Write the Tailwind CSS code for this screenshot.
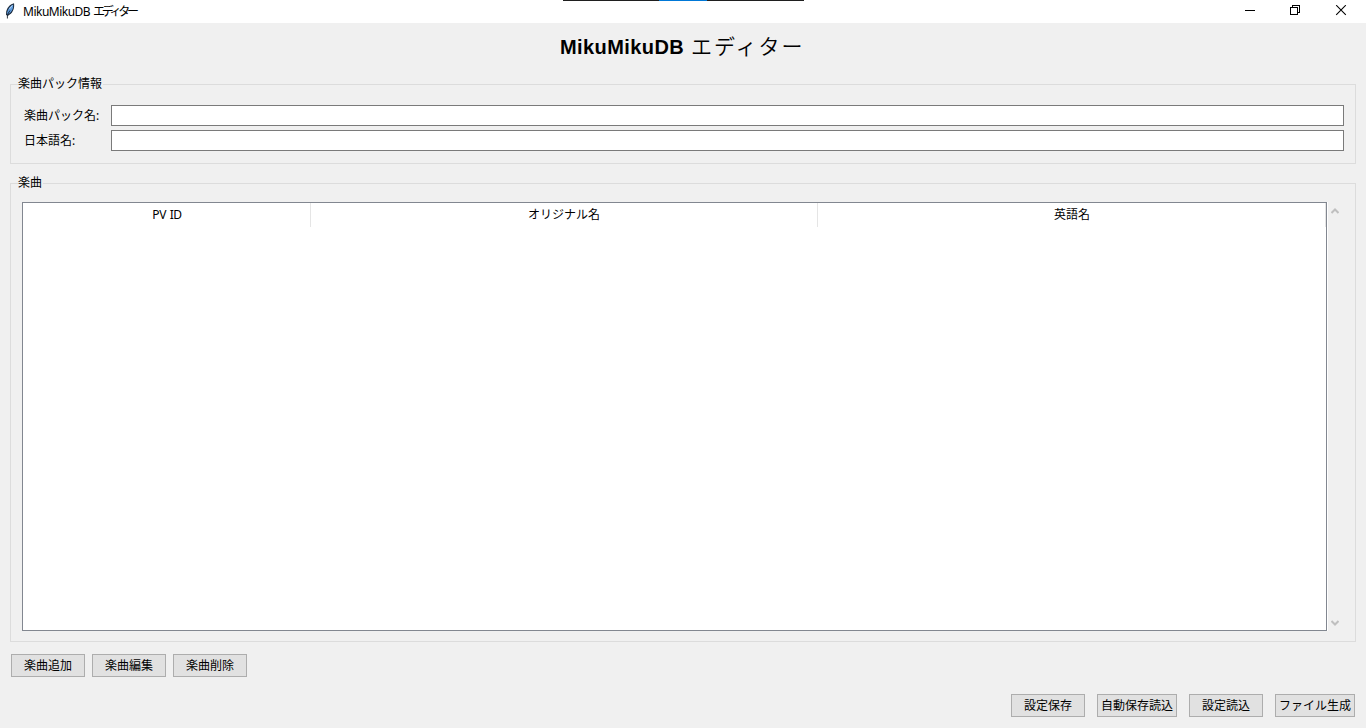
<!DOCTYPE html>
<html lang="ja">
<head>
<meta charset="utf-8">
<title>MikuMikuDB エディター</title>
<script src="https://cdn.jsdelivr.net/npm/@tailwindcss/browser@4"></script>
</head>
<body class="w-[1366px] h-[728px] overflow-hidden bg-[#f0f0f0] text-black text-[12px] leading-[16px] font-['Noto_Sans','Noto_Sans_CJK_JP',sans-serif]">
<div class="relative flex h-full flex-col">
  <div class="absolute left-[563px] top-0 flex h-px w-[241px] bg-[#1f1f1f]"><div class="ml-24 h-px w-12 bg-[#0078d7]"></div></div>

  <header class="flex h-[23px] shrink-0 items-center bg-white">
    <svg class="mb-[2px] ml-[5px] h-4 w-[10px] shrink-0" viewBox="0 0 10 16">
      <path d="M9 .3C5.5 1 2.2 4.5 1.2 8.5L1 12L2.4 12.8C5.2 12 7.9 9 8.8 5.5C9.2 3.5 9.3 1.5 9 .3Z" fill="#1d2b3c"/>
      <path d="M8.2 1.5C5.3 2.8 3 5.5 2.1 9.5L2.4 11.8C5 10.5 7.4 7.8 8 4.8Z" fill="#5b9be0"/>
      <path d="M5 7.5L3.4 10L2.4 13V15.5" fill="none" stroke="#16202c" stroke-width=".9"/>
      <path d="M7.4 2.4L4.4 6" stroke="#b9d4f0" stroke-width="1"/>
    </svg>
    <div class="ml-[8px] flex whitespace-pre"><span class="w-[70px] tracking-[-0.5px]">MikuMikuDB</span><span class="tracking-[-3.3px]">エディター</span></div>
    <div class="mb-[2px] ml-auto mr-[19px] flex items-center gap-[35px]">
      <svg class="h-[11px] w-[10px]" viewBox="0 0 10 11" shape-rendering="crispEdges"><path d="M0 5.5H10" stroke="#000"/></svg>
      <svg class="h-[11px] w-[10px]" viewBox="0 0 10 11" shape-rendering="crispEdges" fill="none" stroke="#000"><path d="M.5 2.5H7.5V9.5H.5Z M2.5 2.5V.5H9.5V7.5H7.5"/></svg>
      <svg class="h-[11px] w-[12px]" viewBox="0 0 12 11" fill="none" stroke="#000" stroke-width="1.1"><path d="M1.2 .2L10.8 9.8M10.8 .2L1.2 9.8"/></svg>
    </div>
  </header>

  <h1 class="ml-[560px] mt-[11px] flex h-[26px] shrink-0 items-center whitespace-pre leading-[26px]"><span class="w-[131px] font-['Liberation_Sans',sans-serif] text-[20px] font-bold tracking-[0.42px]">MikuMikuDB</span><span class="mb-[4px] font-['Noto_Sans_CJK_JP',sans-serif] text-[21px] font-[350] tracking-[2px]">エディター</span></h1>

  <section class="relative mx-[10px] mt-[24px] flex h-[80px] shrink-0 flex-col gap-1 border border-[#dcdcdc] pt-5 pl-[13px]">
    <div class="absolute left-[7px] top-[-9px] bg-[#f0f0f0] pr-px whitespace-nowrap">楽曲パック情報</div>
    <label class="flex h-[21px] items-center"><span class="w-[87px] whitespace-nowrap">楽曲パック名:</span><input class="h-[21px] w-[1233px] border border-[#7a7a7a] bg-white outline-none"></label>
    <label class="flex h-[21px] items-center"><span class="w-[87px] whitespace-nowrap">日本語名:</span><input class="h-[21px] w-[1233px] border border-[#7a7a7a] bg-white outline-none"></label>
  </section>

  <section class="relative mx-[10px] mt-[19px] flex h-[459px] shrink-0 border border-[#dcdcdc] pt-[18px] pl-[11px]">
    <div class="absolute left-[7px] top-[-9px] bg-[#f0f0f0] pr-px whitespace-nowrap">楽曲</div>
    <div class="h-[429px] w-[1305px] border border-[#828790] bg-white">
      <div class="flex h-6 items-center text-center">
        <div class="h-6 w-[288px] border-r border-[#e5e5e5] pl-px leading-[23px] tracking-[-0.4px] [word-spacing:1px]">PV ID</div>
        <div class="h-6 w-[507px] border-r border-[#e5e5e5] leading-[23px]">オリジナル名</div>
        <div class="h-6 w-[508px] border-r border-[#e5e5e5] pl-px leading-[23px]">英語名</div>
      </div>
    </div>
    <div class="flex h-[429px] w-[16px] flex-col items-center justify-between border-l border-white pt-[6px] pb-[5px]">
      <svg class="mr-px h-[6px] w-[8px]" viewBox="0 0 8 6"><path d="M.5 5L4 1.5L7.5 5" fill="none" stroke="#bfbfbf" stroke-width="2"/></svg>
      <svg class="mr-px h-[6px] w-[8px]" viewBox="0 0 8 6"><path d="M.5 1L4 4.5L7.5 1" fill="none" stroke="#bfbfbf" stroke-width="2"/></svg>
    </div>
  </section>

  <div class="ml-[11px] mt-3 flex shrink-0 gap-[7px]">
    <button class="h-[23px] w-[74px] border border-[#adadad] bg-[#e1e1e1] leading-[21px] whitespace-nowrap">楽曲追加</button>
    <button class="h-[23px] w-[74px] border border-[#adadad] bg-[#e1e1e1] leading-[21px] whitespace-nowrap">楽曲編集</button>
    <button class="h-[23px] w-[74px] border border-[#adadad] bg-[#e1e1e1] leading-[21px] whitespace-nowrap">楽曲削除</button>
  </div>

  <div class="mr-[11px] mt-[17px] flex shrink-0 justify-end gap-3">
    <button class="h-[23px] w-[74px] border border-[#adadad] bg-[#e1e1e1] leading-[21px] whitespace-nowrap">設定保存</button>
    <button class="h-[23px] w-[80px] border border-[#adadad] bg-[#e1e1e1] leading-[21px] whitespace-nowrap">自動保存読込</button>
    <button class="h-[23px] w-[74px] border border-[#adadad] bg-[#e1e1e1] leading-[21px] whitespace-nowrap">設定読込</button>
    <button class="h-[23px] w-[80px] border border-[#adadad] bg-[#e1e1e1] leading-[21px] whitespace-nowrap">ファイル生成</button>
  </div>
</div>
</body>
</html>
